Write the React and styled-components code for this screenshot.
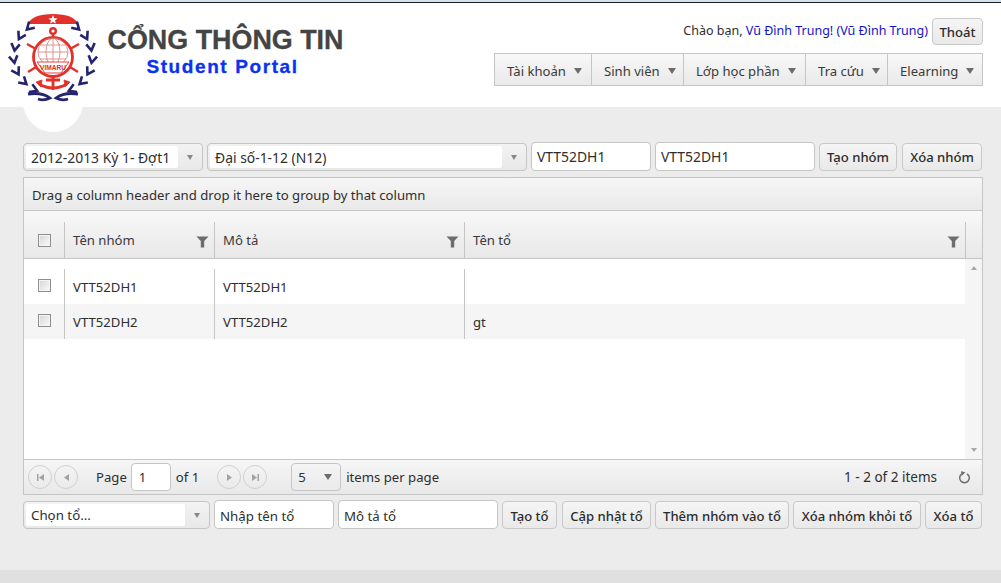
import React from 'react'
import styled, { createGlobalStyle } from 'styled-components'

const Global = createGlobalStyle`
  html, body { margin: 0; padding: 0; background: #ececec; }
  body { font-family: "Noto Sans", "Open Sans", sans-serif; font-size: 13.15px; color: #2e2e2e; }
`

const Page = styled.div`
  width: 1001px;
  height: 583px;
  overflow: hidden;
  display: flex;
  flex-direction: column;
  background: #ececec;
`
const TopLine = styled.div`
  height: 2px;
  background: #d5e3ef;
  border-bottom: 1px solid #1c1c1c;
`
const Header = styled.header`
  position: relative;
  height: 104px;
  background: #fff;
  display: flex;
  justify-content: space-between;
  padding-right: 18px;
`
const Brand = styled.div`
  display: flex;
  position: relative;
`
const LogoBump = styled.div`
  position: absolute;
  left: 23px;
  top: 69px;
  width: 60px;
  height: 60px;
  border-radius: 50%;
  background: #fff;
`
const LogoSvg = styled.svg`
  position: relative;
  width: 110px;
  height: 104px;
  flex: none;
`
const BrandText = styled.div`
  width: 240px;
  display: flex;
  flex-direction: column;
  align-items: center;
  padding-top: 22px;
  margin-left: -4.5px;
`
const BrandTitle = styled.div`
  font-family: "Liberation Sans", Arial, sans-serif;
  font-weight: 700;
  font-size: 26.9px;
  line-height: 30px;
  color: #444;
  white-space: nowrap;
  -webkit-text-stroke: 0.3px #444;
`
const BrandSub = styled.div`
  font-family: "Liberation Sans", Arial, sans-serif;
  font-weight: 700;
  font-size: 19px;
  line-height: 20px;
  letter-spacing: 1.6px;
  color: #0a32f0;
  white-space: nowrap;
  margin-top: 2px;
  margin-left: -6px;
  -webkit-text-stroke: 0.3px #0a32f0;
`
const UserArea = styled.div`
  display: flex;
  flex-direction: column;
  align-items: flex-end;
  padding-top: 15px;
  gap: 8px;
`
const Greeting = styled.div`
  display: flex;
  align-items: center;
  gap: 4px;
  height: 27px;
  font-size: 12.5px;
  white-space: pre;
`
const GreetingText = styled.span`
  margin-bottom: 2px;
`
const UserLink = styled.span`
  color: #1212c8;
`
const Menu = styled.nav`
  display: flex;
  height: 33px;
  box-sizing: border-box;
  border: 1px solid #c5c5c5;
  background: linear-gradient(#f8f8f8, #e9e9e9);
`
const MenuItem = styled.div`
  width: ${p => p.$w}px;
  box-sizing: border-box;
  display: flex;
  align-items: center;
  padding-left: 12px;
  padding-top: 2px;
  gap: 8px;
  border-left: ${p => (p.$first ? 'none' : '1px solid #c5c5c5')};
  white-space: nowrap;
  font-size: 13.1px;
  color: #3a3a3a;
`
const Caret = styled.span`
  width: 0;
  height: 0;
  flex: none;
  border-left: ${p => (p.$soft ? 3.5 : 4)}px solid transparent;
  border-right: ${p => (p.$soft ? 3.5 : 4)}px solid transparent;
  border-top: ${p => (p.$soft ? '5px solid #8a8784' : '6px solid #6f6b68')};
`
const Main = styled.main`
  flex: 1;
  display: flex;
  flex-direction: column;
  padding: 36px 18px 0 23px;
`
const Toolbar = styled.div`
  display: flex;
  align-items: flex-end;
  gap: 4px;
  height: 28px;
`
const SelectBox = styled.div`
  width: ${p => p.$w}px;
  height: 28px;
  flex: none;
  box-sizing: border-box;
  border: 1px solid #c5c5c5;
  border-radius: 4px;
  background: linear-gradient(#f3f3f3, #e8e8e8);
  display: flex;
  align-items: center;
  padding: 2px 0 2px 2px;
`
const SelectText = styled.div`
  flex: 1;
  height: 100%;
  display: flex;
  align-items: center;
  background: #fff;
  padding-left: 5px;
  font-size: ${p => p.$size || 13.3}px;
  white-space: nowrap;
  overflow: hidden;
  border-radius: 2px;
`
const SelectArrow = styled.div`
  width: 24px;
  flex: none;
  display: flex;
  justify-content: center;
`
const TextInput = styled.div`
  width: ${p => p.$w}px;
  height: 29px;
  flex: none;
  box-sizing: border-box;
  border: 1px solid #c5c5c5;
  border-radius: 4px;
  background: #fff;
  display: flex;
  align-items: center;
  padding-left: 5px;
  font-size: ${p => p.$size || 13.3}px;
  white-space: nowrap;
`
const Button = styled.div`
  width: ${p => p.$w}px;
  height: ${p => p.$h || 28}px;
  margin-left: ${p => p.$ml || 0}px;
  flex: none;
  box-sizing: border-box;
  border: 1px solid #c9c9c9;
  border-radius: 4px;
  background: linear-gradient(#f5f5f5, #e9e9e9);
  display: flex;
  align-items: center;
  justify-content: center;
  font-weight: 500;
  font-size: 13.1px;
  color: #2b2b2b;
  white-space: nowrap;
`
const Grid = styled.section`
  margin-top: 6px;
  height: 318px;
  box-sizing: border-box;
  border: 1px solid #c5c5c5;
  display: flex;
  flex-direction: column;
  background: #fff;
`
const GroupBar = styled.div`
  height: 33px;
  flex: none;
  box-sizing: border-box;
  border-bottom: 1px solid #c5c5c5;
  background: linear-gradient(#f6f6f6, #e9e9e9);
  display: flex;
  align-items: center;
  padding-left: 8px;
  padding-top: 1px;
`
const HeadRow = styled.div`
  height: 48px;
  flex: none;
  box-sizing: border-box;
  border-bottom: 1px solid #c5c5c5;
  background: linear-gradient(#f8f8f8, #e8e8e8);
  padding-top: 11px;
  display: grid;
  grid-template-columns: 40px 150px 250px 501px 1fr;
`
const HeadCell = styled.div`
  position: relative;
  display: flex;
  align-items: center;
  padding-left: 8px;
  color: #3a3a3a;
  border-left: ${p => (p.$first ? 'none' : '1px solid #c5c5c5')};
  ${p => p.$center && 'justify-content: center; padding-left: 0;'}
`
const FilterIcon = styled.svg`
  position: absolute;
  right: 5px;
  top: 13px;
  width: 13px;
  height: 13px;
`
const Check = styled.div`
  width: 13px;
  height: 13px;
  box-sizing: border-box;
  border: 1px solid #8e8e8e;
  background: linear-gradient(135deg, #d2d6da, #fbfbfb);
  box-shadow: inset 0 0 0 1px #f4f4f4;
`
const Body = styled.div`
  flex: 1;
  display: flex;
  min-height: 0;
`
const Rows = styled.div`
  flex: 1;
  padding-top: 10px;
`
const Row = styled.div`
  height: 35px;
  display: grid;
  grid-template-columns: 40px 150px 250px 1fr;
  background: ${p => (p.$alt ? '#f5f5f5' : '#fff')};
`
const Cell = styled.div`
  display: flex;
  align-items: center;
  padding-left: 8px;
  border-left: ${p => (p.$first ? 'none' : '1px solid #c5c5c5')};
  ${p => p.$center && 'justify-content: center; padding-left: 0; padding-bottom: 2px;'}
`
const Scrollbar = styled.div`
  width: 17px;
  flex: none;
  background: #f5f5f5;
  display: flex;
  flex-direction: column;
  justify-content: space-between;
  align-items: center;
  padding: 7px 0;
  box-sizing: border-box;
`
const ScrollArrow = styled.span`
  width: 0;
  height: 0;
  border-left: 3.5px solid transparent;
  border-right: 3.5px solid transparent;
  ${p => (p.$up ? 'border-bottom: 4px solid #a8a8a8;' : 'border-top: 4px solid #a8a8a8;')}
`
const Pager = styled.div`
  height: 35px;
  flex: none;
  box-sizing: border-box;
  border-top: 1px solid #c5c5c5;
  background: linear-gradient(#f6f6f6, #e8e8e8);
  display: flex;
  align-items: center;
  padding-left: 4px;
  padding-right: 11px;
`
const PageButton = styled.div`
  width: 24px;
  height: 24px;
  flex: none;
  margin-left: ${p => p.$ml || 0}px;
  box-sizing: border-box;
  border: 1px solid #d0d0d0;
  border-radius: 50%;
  display: flex;
  align-items: center;
  justify-content: center;
  svg { width: 9px; height: 9px; fill: #a3a3a3; }
`
const PagerText = styled.span`
  margin-left: ${p => p.$ml || 0}px;
  white-space: nowrap;
`
const PageInput = styled.div`
  width: 40px;
  height: 28px;
  box-sizing: border-box;
  margin-left: 4px;
  border: 1px solid #c5c5c5;
  border-radius: 4px;
  background: #fff;
  display: flex;
  align-items: center;
  padding-left: 7px;
`
const SizeSelect = styled.div`
  width: 50px;
  height: 28px;
  box-sizing: border-box;
  margin-left: 24px;
  border: 1px solid #c5c5c5;
  border-radius: 4px;
  display: flex;
  align-items: center;
  justify-content: space-between;
  padding: 0 8px 0 6px;
`
const Refresh = styled.svg`
  width: 13px;
  height: 13px;
  margin-left: 21px;
  flex: none;
`
const Info = styled.span`
  margin-left: auto;
  font-size: 13.5px;
  white-space: nowrap;
`
const BottomBar = styled(Toolbar)`
  margin-top: 5px;
  height: 29px;
  ${Button}, ${TextInput} { padding-top: 2px; }
`
const Footer = styled.footer`
  margin: auto -18px 0 -23px;
  height: 13px;
  background: #e0e0e0;
`

// one side of the laurel, as leaf pairs along an arc round the wheel
function laurelLeaves(side) {
  const out = []
  for (let i = 0; i < 7; i++) {
    const a = (-48 + i * 19) * Math.PI / 180
    const px = 53 + side * 39 * Math.cos(a)
    const py = 57 + 37 * Math.sin(a)
    // outward normal and the tangent that runs up the wreath
    const nx = side * Math.cos(a)
    const ny = Math.sin(a)
    const tx = side * Math.sin(a)
    const ty = -Math.cos(a)
    out.push(
      <path
        key={i}
        d={`M${px + 7 * tx + 4.5 * nx} ${py + 7 * ty + 4.5 * ny} L${px} ${py} L${px + 7 * tx - 4 * nx} ${py + 7 * ty - 4 * ny}`}
      />
    )
  }
  return out
}

function Logo() {
  return (
    <LogoSvg viewBox="0 3 110 104">
      <path d="M28 24 Q32 14 53 14 Q74 14 78 24 Z" fill="#e2302a" />
      <polygon points="53,15 54.3,18.2 57.6,18.4 55,20.5 55.9,23.6 53,21.9 50.1,23.6 51,20.5 48.4,18.4 51.7,18.2" fill="#fff" />
      <g fill="none" stroke="#25246e" strokeWidth="2.6">
        {laurelLeaves(-1)}
        {laurelLeaves(1)}
        <path d="M28 94 Q42 92 50 98 Q44 101 38 99" strokeWidth="2.8" />
        <path d="M78 94 Q64 92 56 98 Q62 101 68 99" strokeWidth="2.8" />
      </g>
      <g stroke="#e2302a" strokeWidth="2.4" fill="none">
        <circle cx="53" cy="31" r="2.8" />
        <path d="M53 34 V38 M27 44 L36 49 M79 44 L70 49 M28 72 L36 67 M78 72 L70 67" />
        <circle cx="53" cy="57" r="19.5" strokeWidth="2.8" />
        <path d="M39 84 Q53 92 67 84 M53 77 V90 M46 80 H60" strokeWidth="2.8" />
        <path d="M36 82 L42 80 L41 87 Z M70 82 L64 80 L65 87 Z" fill="#e2302a" strokeWidth="0.8" />
      </g>
      <g stroke="#d67d76" strokeWidth="0.8" fill="none">
        <ellipse cx="53" cy="52" rx="15" ry="14" />
        <ellipse cx="53" cy="52" rx="7" ry="14" />
        <path d="M53 38 V64 M38 52 H68 M40 45 H66 M40 59 H66" />
      </g>
      <path d="M37 62 H69 L61 73 H45 Z" fill="#fff" stroke="#e2302a" strokeWidth="0.9" />
      <text x="53" y="70" textAnchor="middle" fontFamily="Liberation Sans, Arial, sans-serif" fontSize="6.6" fontWeight="700" fill="#e2302a">VIMARU</text>
    </LogoSvg>
  )
}

const Filter = () => (
  <FilterIcon viewBox="0 0 13 13">
    <path d="M0.5 1.5 H12.5 L8.2 6 V12.5 L4.8 12.5 V6 Z" fill="#6d6d6d" />
  </FilterIcon>
)

const Select = ({ w, size, children }) => (
  <SelectBox $w={w}>
    <SelectText $size={size}>{children}</SelectText>
    <SelectArrow><Caret $soft /></SelectArrow>
  </SelectBox>
)

const menu = [
  ['Tài khoản', 96, true],
  ['Sinh viên', 92],
  ['Lớp học phần', 122],
  ['Tra cứu', 82],
  ['Elearning', 95],
]

export default function App() {
  return (
    <Page>
      <Global />
      <TopLine />
      <Header>
        <Brand>
          <LogoBump />
          <Logo />
          <BrandText>
            <BrandTitle>CỔNG THÔNG TIN</BrandTitle>
            <BrandSub>Student Portal</BrandSub>
          </BrandText>
        </Brand>
        <UserArea>
          <Greeting>
            <GreetingText>Chào bạn, <UserLink>Vũ Đình Trung!</UserLink> <UserLink>(Vũ Đình Trung)</UserLink></GreetingText>
            <Button $w={51} $h={27}>Thoát</Button>
          </Greeting>
          <Menu>
            {menu.map(([label, w, first]) => (
              <MenuItem key={label} $w={w} $first={first}>{label}<Caret /></MenuItem>
            ))}
          </Menu>
        </UserArea>
      </Header>
      <Main>
        <Toolbar>
          <Select w={180} size={13.9}>2012-2013 Kỳ 1- Đợt1</Select>
          <Select w={320} size={13.9}>Đại số-1-12 (N12)</Select>
          <TextInput $w={120} $size={13.9}>VTT52DH1</TextInput>
          <TextInput $w={160} $size={13.9}>VTT52DH1</TextInput>
          <Button $w={78}>Tạo nhóm</Button>
          <Button $w={80} $ml={1}>Xóa nhóm</Button>
        </Toolbar>
        <Grid>
          <GroupBar>Drag a column header and drop it here to group by that column</GroupBar>
          <HeadRow>
            <HeadCell $first $center><Check /></HeadCell>
            <HeadCell>Tên nhóm<Filter /></HeadCell>
            <HeadCell>Mô tả<Filter /></HeadCell>
            <HeadCell>Tên tổ<Filter /></HeadCell>
            <HeadCell />
          </HeadRow>
          <Body>
            <Rows>
              <Row>
                <Cell $first $center><Check /></Cell>
                <Cell>VTT52DH1</Cell>
                <Cell>VTT52DH1</Cell>
                <Cell />
              </Row>
              <Row $alt>
                <Cell $first $center><Check /></Cell>
                <Cell>VTT52DH2</Cell>
                <Cell>VTT52DH2</Cell>
                <Cell>gt</Cell>
              </Row>
            </Rows>
            <Scrollbar>
              <ScrollArrow $up />
              <ScrollArrow />
            </Scrollbar>
          </Body>
          <Pager>
            <PageButton><svg viewBox="0 0 9 9"><path d="M1 1h1.5v7H1zM8 1v7L3 4.5z" /></svg></PageButton>
            <PageButton $ml={2}><svg viewBox="0 0 9 9"><path d="M7 1v7L2 4.5z" /></svg></PageButton>
            <PagerText $ml={18}>Page</PagerText>
            <PageInput>1</PageInput>
            <PagerText $ml={5}>of 1</PagerText>
            <PageButton $ml={18}><svg viewBox="0 0 9 9"><path d="M2 1v7l5-3.5z" /></svg></PageButton>
            <PageButton $ml={2}><svg viewBox="0 0 9 9"><path d="M1 1v7l5-3.5zM6.5 1H8v7H6.5z" /></svg></PageButton>
            <SizeSelect>5<Caret /></SizeSelect>
            <PagerText $ml={5}>items per page</PagerText>
            <Info>1 - 2 of 2 items</Info>
            <Refresh viewBox="0 0 14 14">
              <path d="M4.4 3 A5.2 5.2 0 1 0 9.6 3" fill="none" stroke="#6d6d6d" strokeWidth="1.6" />
              <path d="M3.2 0.4 L8 1.4 L4 5.2 Z" fill="#6d6d6d" />
            </Refresh>
          </Pager>
        </Grid>
        <BottomBar>
          <Select w={187}>Chọn tổ...</Select>
          <TextInput $w={120}>Nhập tên tổ</TextInput>
          <TextInput $w={160}>Mô tả tổ</TextInput>
          <Button $w={55}>Tạo tổ</Button>
          <Button $w={89} $ml={1}>Cập nhật tổ</Button>
          <Button $w={134}>Thêm nhóm vào tổ</Button>
          <Button $w={128}>Xóa nhóm khỏi tổ</Button>
          <Button $w={57}>Xóa tổ</Button>
        </BottomBar>
        <Footer />
      </Main>
    </Page>
  )
}
